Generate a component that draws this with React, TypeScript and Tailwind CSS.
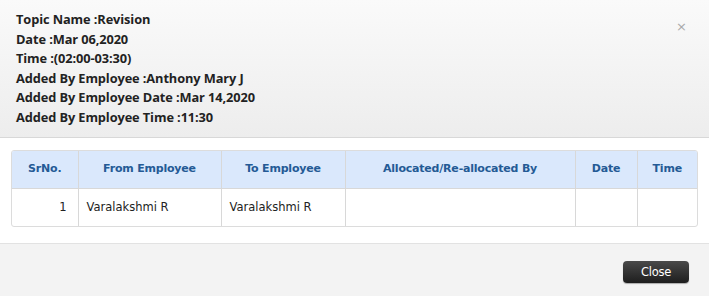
export default function App() {
  const info = [
    ["Topic Name :", "Revision"],
    ["Date :", "Mar 06,2020"],
    ["Time :", "(02:00-03:30)"],
    ["Added By Employee :", "Anthony Mary J"],
    ["Added By Employee Date :", "Mar 14,2020"],
    ["Added By Employee Time :", "11:30"],
  ];

  return (
    <div className="w-[709px] h-[296px] flex flex-col bg-white overflow-hidden" style={{ fontFamily: '"Open Sans", "Liberation Sans", sans-serif' }}>
      {/* ── Header ─────────────────────────────────── */}
      <div className="h-[138px] flex justify-between bg-gradient-to-b from-[#fafafa] to-[#ededed] border-b border-[#d8d8d8] pl-4 pr-[22px] pt-[10px]">
        <div className="flex flex-col">
          {info.map(([k, v]) => (
            <div key={k} className="h-[19.6px] text-[12.8px] leading-[19.6px] font-bold text-[#222] tracking-[-0.1px]">
              {k}{v}
            </div>
          ))}
        </div>
        <div className="pt-[9px] text-[13px] leading-[16px] text-[#aaa]" style={{ fontFamily: '"DejaVu Sans", sans-serif' }}>×</div>
      </div>

      {/* ── Body / table ───────────────────────────── */}
      <div className="h-[106px] px-[11px] pt-[12px] border-b border-[#e2e2e2]">
        <div className="w-[687px] border border-[#dcdcdc] rounded-[3px] overflow-hidden" style={{ fontFamily: "Tahoma, Verdana, \"DejaVu Sans\", sans-serif" }}>
          <table className="w-full border-collapse table-fixed">
            <colgroup>
              <col className="w-[66px]" />
              <col className="w-[143px]" />
              <col className="w-[124px]" />
              <col className="w-[230px]" />
              <col className="w-[62px]" />
              <col className="w-[60px]" />
            </colgroup>
            <thead>
              <tr className="h-[37px] bg-[#dae8fc] text-[#245a95] font-bold text-[11px] tracking-[-0.2px]">
                <th className="border-r border-b border-[#d8d8d8] text-center">SrNo.</th>
                <th className="border-r border-b border-[#d8d8d8] text-center">From Employee</th>
                <th className="border-r border-b border-[#d8d8d8] text-center">To Employee</th>
                <th className="border-r border-b border-[#d8d8d8] text-center">Allocated/Re-allocated By</th>
                <th className="border-r border-b border-[#d8d8d8] text-center">Date</th>
                <th className="border-b border-[#d8d8d8] text-center">Time</th>
              </tr>
            </thead>
            <tbody>
              <tr className="h-[38px] text-[#222] text-[11.5px]">
                <td className="border-r border-[#d8d8d8] text-right pr-[11px]">1</td>
                <td className="border-r border-[#d8d8d8] pl-[8px]">Varalakshmi R</td>
                <td className="border-r border-[#d8d8d8] pl-[8px]">Varalakshmi R</td>
                <td className="border-r border-[#d8d8d8]"></td>
                <td className="border-r border-[#d8d8d8]"></td>
                <td></td>
              </tr>
            </tbody>
          </table>
        </div>
      </div>

      {/* ── Footer ─────────────────────────────────── */}
      <div className="flex-1 bg-[#f3f3f3] flex justify-end items-start pt-[17px] pr-[20px]">
        <button className="w-[66px] h-[22px] rounded-[4px] bg-gradient-to-b from-[#4a4a4a] to-[#1e1e1e] text-white text-[11.5px] leading-[22px] text-center tracking-[-0.3px] shadow-[0_1px_1px_rgba(0,0,0,0.3)]" style={{ fontFamily: "Tahoma, Verdana, \"DejaVu Sans\", sans-serif" }}>
          Close
        </button>
      </div>
    </div>
  );
}
